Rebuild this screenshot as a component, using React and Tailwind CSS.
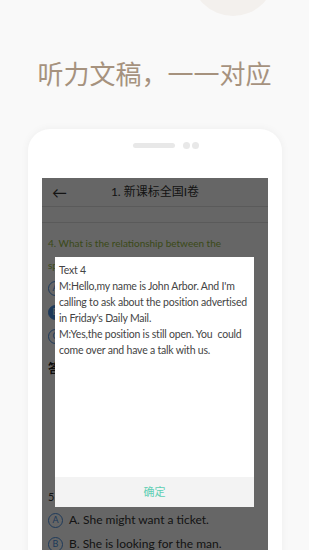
import React from "react";

const font = { fontFamily: '"Noto Sans", "Noto Sans CJK SC", sans-serif' };
const screenFont = { fontFamily: 'Lato, "Noto Sans CJK SC", sans-serif' };

const Radio = ({ letter, filled }) => (
  <div
    className={`w-[15px] h-[15px] rounded-full border flex items-center justify-center text-[9px] shrink-0 ${
      filled ? "bg-[#4a8fe0] border-[#4a8fe0] text-white" : "border-[#4a8fe0] text-[#4a8fe0]"
    }`}
  >
    {letter}
  </div>
);

const App = () => {
  return (
    <div
      className="w-[309px] h-[550px] overflow-hidden bg-[#f9f9f9] flex flex-col"
      style={font}
    >
      {/* decorative circle at the top */}
      <div className="w-[84px] h-[84px] rounded-full bg-[#f3f0ed] ml-[191px] mt-[-68px] shrink-0" />

      <h1 className="mt-[42px] text-center text-[26px] leading-[30px] text-[#a6927e] font-normal font-['Noto_Sans_CJK_SC',sans-serif]">
        听力文稿，一一对应
      </h1>

      {/* phone */}
      <div className="mt-[41px] ml-[28px] w-[254px] flex-1 bg-white rounded-t-[22px] shadow-[0_0_8px_rgba(0,0,0,0.05)] flex flex-col">
        <div className="flex justify-center gap-[8px] pt-[14px] h-[49px] pl-[22px] items-start">
          <div className="w-[42px] h-[5px] rounded-full bg-[#e8e8e8]" />
          <div className="flex gap-[2px] mt-[-1px]">
            <div className="w-[7px] h-[7px] rounded-full bg-[#e8e8e8]" />
            <div className="w-[7px] h-[7px] rounded-full bg-[#e8e8e8]" />
          </div>
        </div>

        {/* screen */}
        <div className="relative mx-[14px] flex-1 bg-white overflow-hidden" style={screenFont}>
          <div className="h-[29px] flex items-center px-[10px] border-b border-[#e0e0e0] relative">
            <span className="text-[#333] text-[15px] leading-none">←</span>
            <span className="absolute inset-x-0 text-center text-[12px] text-[#333]">
              1. 新课标全国I卷
            </span>
          </div>
          <div className="h-[16px] border-b border-[#e0e0e0]" />
          <div className="px-[6px] pt-[9px] text-[10px]">
            <p className="text-[#94b83e] leading-[22px]">4. What is the relationship between the</p>
            <p className="text-[#94b83e] leading-[22px]">speakers?</p>
            <div className="flex items-center gap-[6px] text-[#333] h-[24px]">
              <Radio letter="A" />
              <span>A. Colleagues.</span>
            </div>
            <div className="flex items-center gap-[6px] text-[#333] h-[24px]">
              <Radio letter="B" filled />
              <span>B. Strangers.</span>
            </div>
            <div className="flex items-center gap-[6px] text-[#333] h-[24px]">
              <Radio letter="C" />
              <span>C. Friends.</span>
            </div>
            <p className="mt-[10px] h-[22px] leading-[22px] text-[#222] font-bold text-[12px]">答案：B</p>
            <div className="h-[106px]" />
            <p className="h-[22px] leading-[22px] text-[#333] text-[11px]">5. What does the woman want?</p>
            <div className="flex items-center gap-[6px] text-[#333] h-[24px] text-[12px]">
              <Radio letter="A" />
              <span>A. She might want a ticket.</span>
            </div>
            <div className="flex items-center gap-[6px] text-[#333] h-[24px] text-[12px]">
              <Radio letter="B" />
              <span>B. She is looking for the man.</span>
            </div>
          </div>

          {/* overlay */}
          <div className="absolute inset-0 bg-black/60" />

          {/* dialog */}
          <div className="absolute left-[13px] top-[79px] w-[199px] h-[250px] bg-white flex flex-col">
            <div className="flex-1 px-[4px] pt-[5px] text-[10.5px] tracking-[-0.2px] leading-[16px] text-[#444] whitespace-nowrap">
              <p>Text 4</p>
              <p>M:Hello,my name is John Arbor. And I'm</p>
              <p>calling to ask about the position advertised</p>
              <p>in Friday's Daily Mail.</p>
              <p>M:Yes,the position is still open. You&nbsp; could</p>
              <p>come over and have a talk with us.</p>
            </div>
            <div className="h-[30px] bg-[#f3f3f3] flex items-center justify-center text-[11px] text-[#5fcfb4]">
              确定
            </div>
          </div>
        </div>
      </div>
    </div>
  );
};

export default App;
